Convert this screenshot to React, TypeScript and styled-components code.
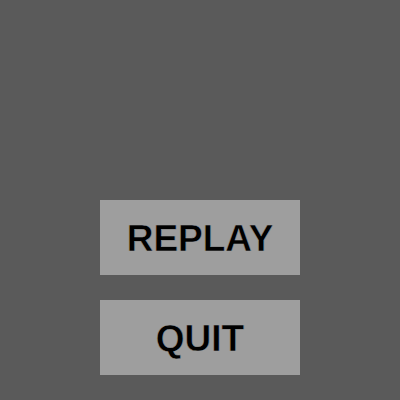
import React from "react";
import styled, { createGlobalStyle } from "styled-components";

const Global = createGlobalStyle`
  html, body { margin: 0; padding: 0; background: #5a5a5a; }
  #root { width: 400px; height: 400px; }
`;

const Screen = styled.div`
  width: 400px;
  height: 400px;
  background: #5a5a5a;
  display: flex;
  flex-direction: column;
  align-items: center;
  padding-top: 200px;
  box-sizing: border-box;
  gap: 25px;
`;

const MenuButton = styled.button`
  width: 200px;
  height: 75px;
  border: none;
  margin: 0;
  padding: 3px 0 0 0;
  background: #9e9e9e;
  color: #000;
  font-family: "Liberation Sans", Arial, sans-serif;
  font-size: 37px;
  font-weight: 700;
  -webkit-text-stroke: 0.5px #9e9e9e;
  display: flex;
  align-items: center;
  justify-content: center;
  cursor: pointer;
`;

export default function App() {
  return (
    <>
      <Global />
      <Screen>
        <MenuButton>REPLAY</MenuButton>
        <MenuButton>QUIT</MenuButton>
      </Screen>
    </>
  );
}
